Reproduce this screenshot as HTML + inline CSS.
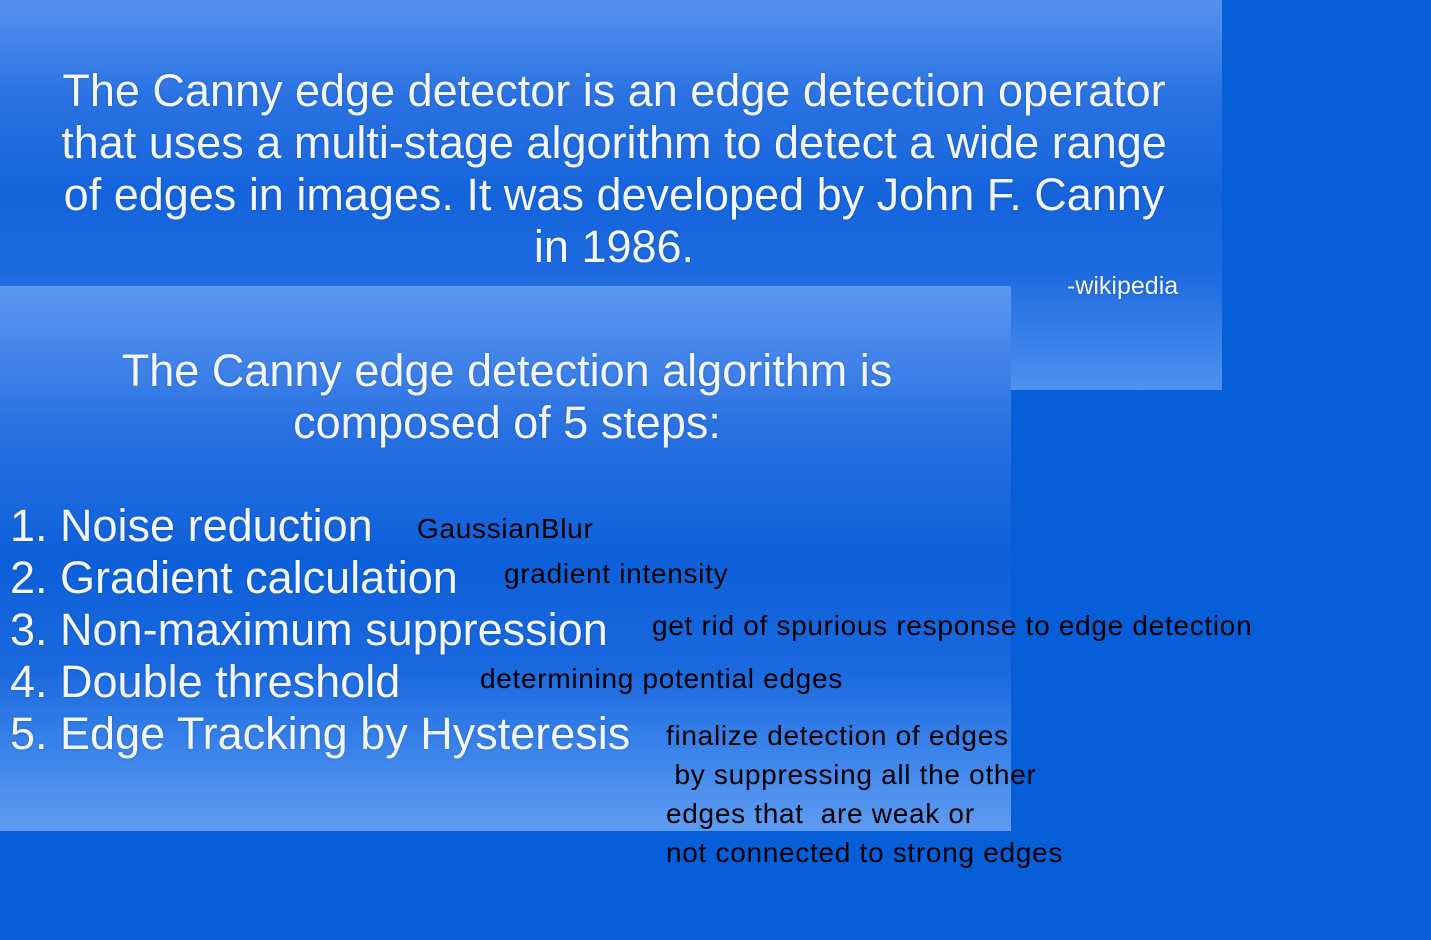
<!DOCTYPE html>
<html><head><meta charset="utf-8"><style>
body{margin:0;width:1431px;height:940px;background:#075ed9;position:relative;overflow:hidden;font-family:"Liberation Sans",Arial,sans-serif}
.p1{position:absolute;left:0;top:0;width:1222px;height:390px;background:linear-gradient(#5592ee 0%,#2a72e2 25%,#1564dc 50%,#1e6ae0 70%,#4d92ee 100%)}
.p2{position:absolute;left:0;top:286px;width:1011px;height:545px;background:linear-gradient(#5c98f1 0%,#2b72e2 25%,#0d60da 50%,#1a68de 70%,#3a83ea 85%,#5f9cf2 100%)}
.w{position:absolute;color:#f2f6ff;white-space:nowrap;text-shadow:0 0 2px rgba(0,0,0,.25)}
.c{left:0;text-align:center}
.b{position:absolute;color:#000;font-size:28px;letter-spacing:0.7px;white-space:nowrap;font-family:"Liberation Sans",sans-serif}
</style></head><body>
<div class="p1"></div>
<div class="w c" style="top:65px;width:1228px;font-size:45px;line-height:52px">The Canny edge detector is an edge detection operator<br>that uses a multi-stage algorithm to detect a wide range<br>of edges in images. It was developed by John F. Canny<br>in 1986.</div>
<div class="w" style="left:1067px;top:272px;font-size:25px">-wikipedia</div>
<div class="p2"></div>
<div class="w c" style="top:345px;width:1014px;font-size:45px;line-height:52px">The Canny edge detection algorithm is<br>composed of 5 steps:</div>
<div class="w" style="left:10px;top:500px;font-size:45px;line-height:52px">1. Noise reduction<br>2. Gradient calculation<br>3. Non-maximum suppression<br>4. Double threshold<br>5. Edge Tracking by Hysteresis</div>
<div class="b" style="left:417px;top:513px">GaussianBlur</div>
<div class="b" style="left:504px;top:558px">gradient intensity</div>
<div class="b" style="left:652px;top:610px">get rid of spurious response to edge detection</div>
<div class="b" style="left:480px;top:663px">determining potential edges</div>
<div class="b" style="left:666px;top:716px;line-height:39px">finalize detection of edges<br>&nbsp;by suppressing all the other<br>edges that&nbsp; are weak or<br>not connected to strong edges</div>
</body></html>
